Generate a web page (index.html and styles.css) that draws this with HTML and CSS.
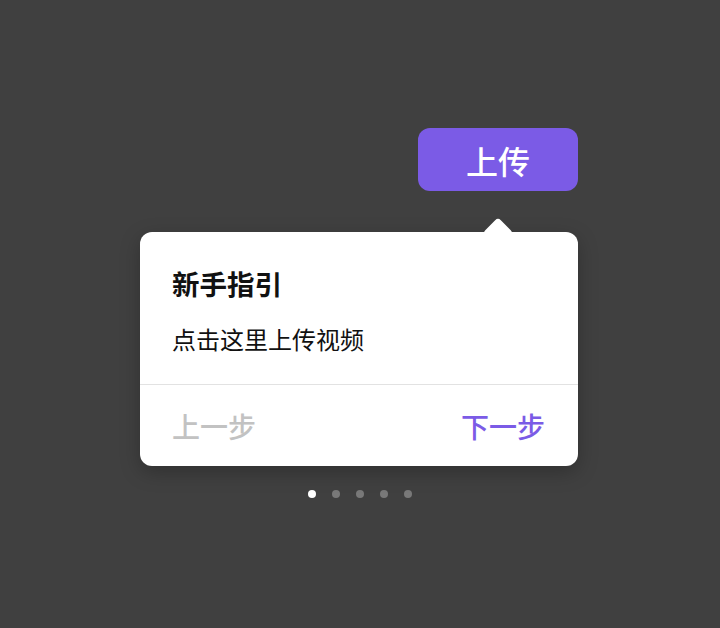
FILE: index.html
```html
<!DOCTYPE html>
<html lang="zh">
<head>
    <meta charset="UTF-8">
    <meta name="viewport" content="width=device-width, initial-scale=1.0">
    <title>新手指引</title>
    <link rel="stylesheet" href="styles.css">
</head>
<body>

    <div class="guide">
        <!-- 上传按钮 -->
        <button class="upload-btn">上传</button>

        <!-- 引导卡片 -->
        <div class="guide-card">
            <div class="guide-body">
                <h2 class="guide-title">新手指引</h2>
                <p class="guide-text">点击这里上传视频</p>
            </div>
            <div class="guide-footer">
                <span class="step-btn prev">上一步</span>
                <span class="step-btn next">下一步</span>
            </div>
        </div>

        <!-- 步骤指示点 -->
        <div class="dots">
            <span class="dot active"></span>
            <span class="dot"></span>
            <span class="dot"></span>
            <span class="dot"></span>
            <span class="dot"></span>
        </div>
    </div>

</body>
</html>
```

FILE: styles.css
```css
body {
    margin: 0;
    padding: 0;
    background-color: #404040;
    font-family: "Noto Sans CJK SC", "Noto Sans", sans-serif;
    height: 628px;
    overflow: hidden;
}

.guide {
    width: 438px;
    margin-left: 140px;
    padding-top: 128px;
    display: flex;
    flex-direction: column;
}

.upload-btn {
    align-self: flex-end;
    width: 160px;
    height: 63px;
    border: none;
    border-radius: 12px;
    background-color: #7b5be6;
    color: #fff;
    font-family: inherit;
    font-size: 32px;
    font-weight: 500;
    padding: 0;
    cursor: pointer;
}

.guide-card {
    position: relative;
    margin-top: 41px;
    background-color: #fff;
    border-radius: 12px;
    box-shadow: 0 6px 20px rgba(0, 0, 0, 0.25);
}

/* 小三角 */
.guide-card::before {
    content: "";
    position: absolute;
    top: -10px;
    right: 69px;
    width: 22px;
    height: 22px;
    background-color: #fff;
    border-radius: 4px;
    transform: rotate(45deg);
}

.guide-body {
    position: relative;
    padding: 33px 32px 29px;
    border-bottom: 1.5px solid #e2e2e2;
}

.guide-title {
    margin: 0;
    font-size: 27.5px;
    font-weight: 700;
    line-height: 36px;
    color: #111;
}

.guide-text {
    margin: 22px 0 0;
    font-size: 24px;
    line-height: 32px;
    color: #111;
}

.guide-footer {
    display: flex;
    justify-content: space-between;
    align-items: center;
    height: 81px;
    padding: 0 33px 0 32px;
}

.step-btn {
    font-size: 28px;
    font-weight: 500;
    cursor: pointer;
}

.step-btn.prev {
    color: #c2c2c2;
}

.step-btn.next {
    color: #7b5be6;
}

.dots {
    display: flex;
    justify-content: center;
    gap: 16px;
    margin-top: 24px;
    padding-left: 2px;
}

.dot {
    width: 8px;
    height: 8px;
    border-radius: 50%;
    background-color: #797979;
}

.dot.active {
    background-color: #fff;
}
```
